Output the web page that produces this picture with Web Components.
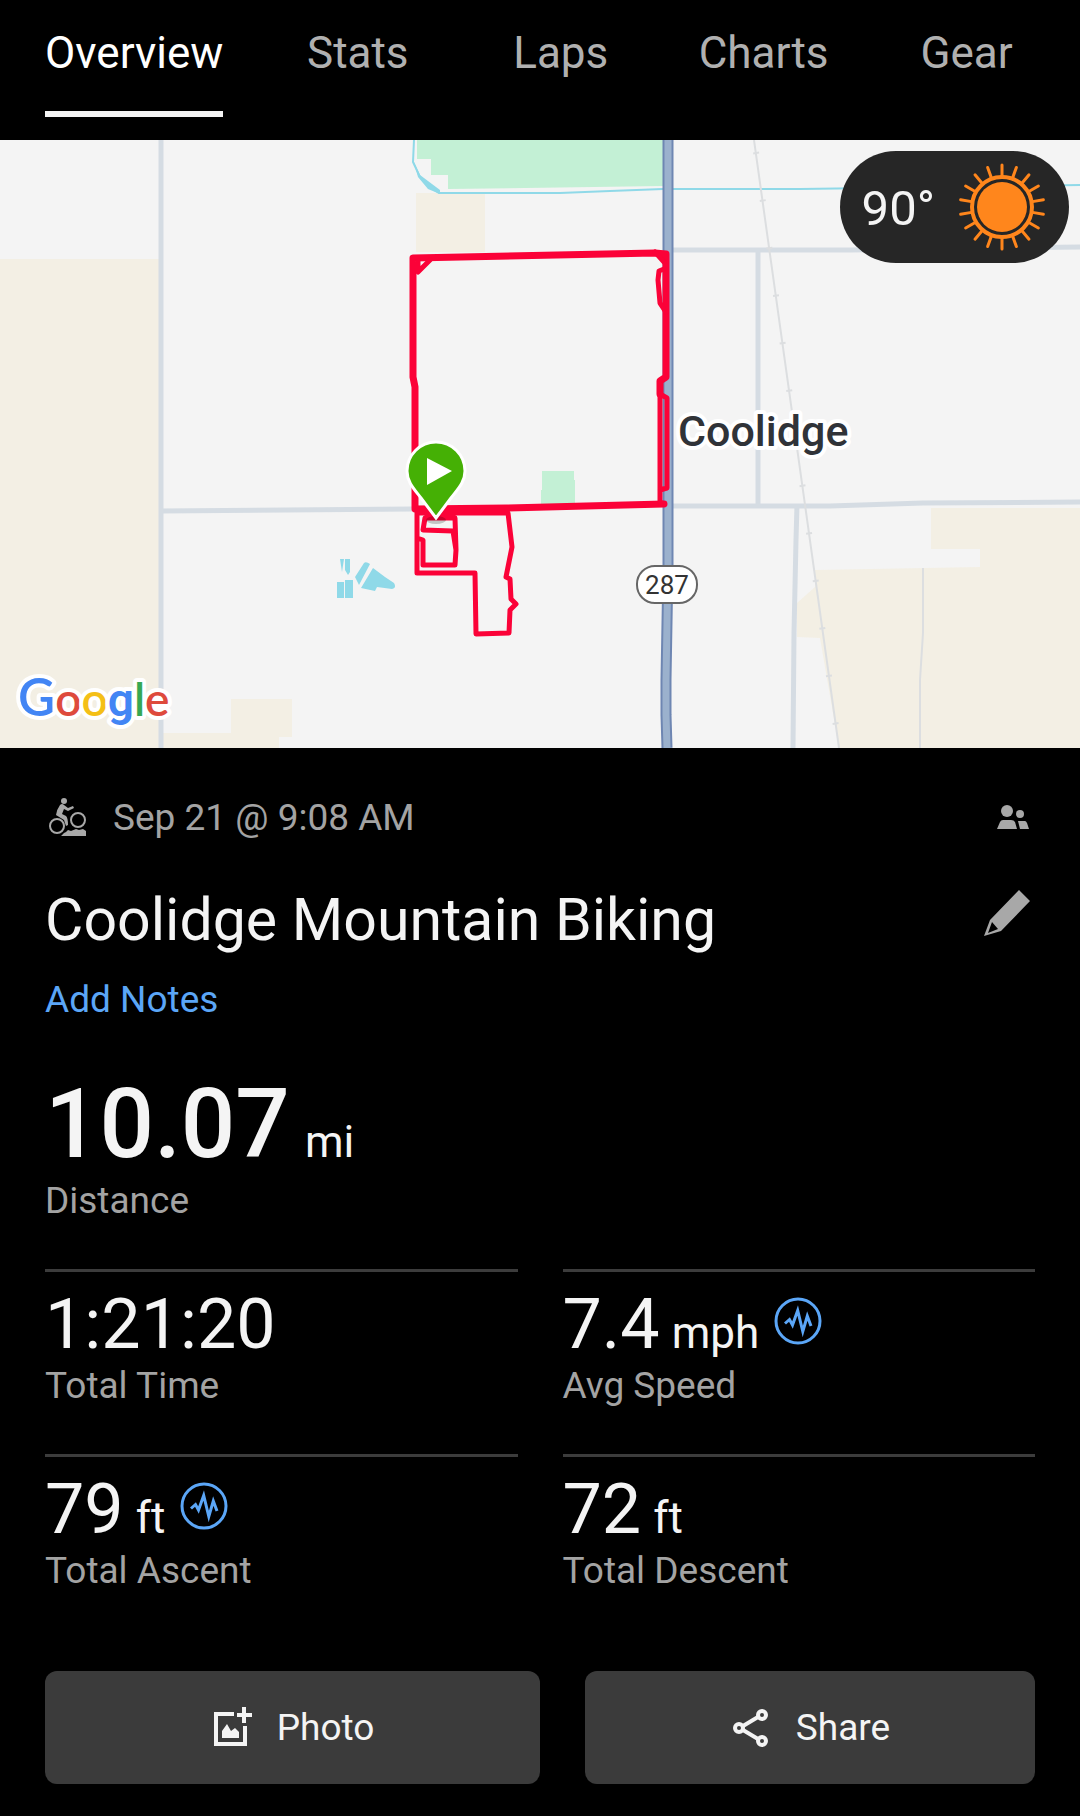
<!DOCTYPE html>
<html lang="en">
<head>
<meta charset="utf-8">
<meta name="viewport" content="width=device-width, initial-scale=1">
<title>Coolidge Mountain Biking</title>
<style>
  body {
    margin: 0;
    background-color: #000;
    color: #f4f4f4;
    font-family: Roboto, "Liberation Sans", sans-serif;
    --muted: #a3a3a3;
    --accent: #5ba6f7;
    --line: #3c3c3c;
  }
</style>
</head>
<body>

<tab-bar>
  <tab-item active>Overview</tab-item>
  <tab-item>Stats</tab-item>
  <tab-item>Laps</tab-item>
  <tab-item>Charts</tab-item>
  <tab-item>Gear</tab-item>
</tab-bar>

<route-map>
  <weather-badge>90°</weather-badge>
</route-map>

<activity-page>
  <activity-header>
    <span slot="date">Sep 21 @ 9:08 AM</span>
    <span slot="title">Coolidge Mountain Biking</span>
    <span slot="notes">Add Notes</span>
  </activity-header>

  <stat-item large unit="mi" label="Distance">10.07</stat-item>

  <stat-grid>
    <stat-item label="Total Time">1:21:20</stat-item>
    <stat-item unit="mph" label="Avg Speed" graph>7.4</stat-item>
    <stat-item unit="ft" label="Total Ascent" graph>79</stat-item>
    <stat-item unit="ft" label="Total Descent">72</stat-item>
  </stat-grid>

  <action-bar>
    <action-button icon="photo">Photo</action-button>
    <action-button icon="share">Share</action-button>
  </action-bar>
</activity-page>

<script>
// base class: puts the html of the subclass in an open shadow root
class BaseElement extends HTMLElement {
  constructor() {
    super();
    this.attachShadow({ mode: 'open' });
  }

  connectedCallback() {
    this.shadowRoot.innerHTML = this.render();
  }
}

class TabBar extends BaseElement {
  render() {
    return `
<style>
  :host{
    display: block;
  }
  nav{
    display: flex;
    padding: 0 12px;
  }
</style>
<nav><slot></slot></nav>`;
  }
}

class TabItem extends BaseElement {
  render() {
    return `
<style>
  :host{
    box-sizing: border-box;
    display: flex;
    justify-content: center;
    flex: 1 1 0;
    min-width: max-content;
    padding: 27px 33px 23px;
  }
  a{
    color: #b0b0b0;
    font-size: 44px;
    line-height: 52px;
    padding-bottom: 32px;
    border-bottom: 6px solid transparent;
    text-decoration: none;
  }
  :host([active]) a{
    color: #fff;
    border-color: #f4f4f4;
  }
</style>
<a href="#"><slot></slot></a>`;
  }
}

class RouteMap extends BaseElement {
  render() {
    return `
<style>
  :host{
    display: block;
    position: relative;
    background-color: #f4f4f4;
  }
  svg{
    display: block;
    width: 100%;
  }
  slot{
    position: absolute;
    display: block;
    top: 11px;
    right: 11px;
  }
  .sand{ fill: #f3efe4; }
  .park{ fill: #c3f0d5; }
  .water{ fill: #8fd9e8; }
  .road{ fill: none; stroke: #d5dce3; stroke-width: 5; }
  .lane{ fill: none; stroke: #dcdee0; stroke-width: 2; }
  .route{ fill: none; stroke: #fb0238; stroke-width: 5; stroke-linejoin: round; stroke-linecap: round; }
  .thick{ stroke-width: 7; }
  .town{
    font-size: 43px;
    font-weight: 500;
    fill: #303338;
  }
  .halo{
    stroke: #fff;
    stroke-width: 8px;
    stroke-linejoin: round;
    paint-order: stroke;
  }
  .shield{ font-size: 26px; fill: #333; text-anchor: middle; }
  .google{ font-family: Lato, sans-serif; font-size: 46px; font-weight: 600; }
  .google .cap{ font-size: 51px; }
</style>
<svg viewBox="0 0 1080 608">
  <!-- ground -->
  <path class="sand" d="M0 119H161V608H0zM416 53H485V112H416zM161 593H231V559H292V597H279V608H161z
    M931 368H1080V608H839L820 498L797 497V463L815 447V430L980 427V409H931z"/>
  <path class="park" d="M417 0H663V46L448 49V35H431V19H417zM542 331H574V340H575V364H541V350H542z"/>
  <path fill="none" stroke="#8fd9e8" stroke-width="2" d="M414 0L413 22L420 37L428 46L439 53H560L610 51L663 49H800L1080 45"/>
  <path class="water" d="M413 20L420 35L440 50V54L428 49L418 37z"/>
  <path class="water" d="M345 419H350V432L348 435L345 430zM340 419H344L342 432zM337 442H344V458H337zM345 440H353V458H345z
    M355 437L364 423Q366 421 370 424L359 445zM373 428L385 437L394 443Q397 448 392 449L377 447L375 451L361 448z"/>

  <!-- roads -->
  <path class="road" d="M161 0V608M161 371L412 369M672 110H850L1080 107M758 110V365
    M672 366H830L923 363L1080 362M797 365L796 400L794 493L793 608"/>
  <path class="lane" d="M923 428V493L920 540V608M754 0L839 608"/>
  <path class="lane" style="stroke-width:6" stroke-dasharray="2 46" d="M756 12L839 608"/>
  <path fill="none" stroke="#6e86b2" stroke-width="11" d="M668 0V425L666 540V575L667 608"/>
  <path fill="none" stroke="#9bb1cd" stroke-width="7" d="M668 0V425L666 540V575L667 608"/>

  <!-- ridden track -->
  <path class="route thick" d="M415 368V247L413 237V118L655 113L666 114V237L660 241V254M415 369L507 368L664 364"/>
  <path class="route" d="M430 120L418 132V121M655 112L664 122M664 129L659 131L658 140L660 163L666 172
    M660 254L667 258V348L660 350M660 254V362L664 364"/>
  <path class="route" d="M417 370V398L423 400V425H455L456 410L453 391L423 390L425 378H455L456 410
    M417 398V433H475L476 494L509 493L510 470L516 464L511 459L510 439L506 437L512 407L508 373H417"/>

  <!-- start pin -->
  <ellipse cx="436" cy="380" rx="10" ry="4" fill="#000" opacity=".2"/>
  <path fill="#45b005" stroke="#fff" stroke-width="3" d="M436 378L451 358C458 349 465 342 465 331A29 29 0 0 0 407 331C407 342 414 349 421 358z"/>
  <path fill="#fff" d="M427 318L452 331L427 345z"/>

  <text class="town halo" x="678" y="306">Coolidge</text>
  <rect x="637" y="426" width="60" height="37" rx="18" fill="#fff" stroke="#666" stroke-width="2"/>
  <text class="shield" x="667" y="454">287</text>
  <text class="google halo" x="18" y="576"><tspan class="cap" fill="#4285f4">G</tspan><tspan fill="#de4a3c">o</tspan><tspan fill="#f4bf16">o</tspan><tspan fill="#4285f4" font-family="Roboto">g</tspan><tspan fill="#36a853">l</tspan><tspan fill="#de4a3c">e</tspan></text>
</svg>
<slot></slot>`;
  }
}

class WeatherBadge extends BaseElement {
  render() {
    let rays = '';
    for (let i = 0; i < 18; i++) {
      rays += `<path d="M44 2V13" transform="rotate(${i * 20} 44 44)"/>`;
    }
    return `
<style>
  :host{
    display: flex;
    align-items: center;
    gap: 23px;
    padding: 12px 23px 12px 22px;
    border-radius: 57px;
    background-color: #262626;
    font-size: 49px;
    line-height: 56px;
  }
  span{
    padding-top: 4px;
  }
  svg{
    width: 88px;
    height: 88px;
  }
</style>
<span><slot></slot></span>
<svg viewBox="0 0 88 88" fill="none" stroke="#ff861c" stroke-width="3" stroke-linecap="round">
  <circle cx="44" cy="44" r="25" fill="#ff861c" stroke="none"/>
  <circle cx="44" cy="44" r="30" stroke-width="4"/>
  ${rays}
</svg>`;
  }
}

class ActivityPage extends BaseElement {
  render() {
    return `
<style>
  :host{
    display: block;
    padding: 46px 45px 32px;
  }
</style>
<main><slot></slot></main>`;
  }
}

class ActivityHeader extends BaseElement {
  render() {
    return `
<style>
  :host{
    display: block;
    margin-bottom: 47px;
  }
  .row{
    display: flex;
    align-items: flex-start;
    justify-content: space-between;
  }
  .date{
    display: flex;
    gap: 23px;
    color: var(--muted);
    font-size: 37px;
    line-height: 47px;
  }
  h1{
    margin: 0;
    font-size: 59px;
    font-weight: 400;
    line-height: 70px;
  }
  .top{
    margin-bottom: 44px;
  }
  .title{
    margin-bottom: 23px;
  }
  svg{
    display: block;
    fill: #a8a8a8;
  }
  button{
    padding: 0;
    border: 0;
    background: none;
    cursor: pointer;
  }
  a{
    display: block;
    width: max-content;
    color: var(--accent);
    font-size: 37px;
    line-height: 44px;
    text-decoration: none;
  }
</style>
<div class="row top">
  <div class="date">
    <svg width="45" height="45" viewBox="0 0 45 45">
      <circle cx="19" cy="7" r="3"/>
      <path d="M15 11Q17 9 19 11L23 14L28 12L29 14L23 17L19 15L17 20L21 22Q23 24 23 31L21 32L19 26L11 21Q12 15 15 11z"/>
      <circle cx="12" cy="32" r="7" fill="none" stroke="#a8a8a8" stroke-width="2"/>
      <circle cx="33" cy="26" r="7" fill="none" stroke="#a8a8a8" stroke-width="2"/>
      <path d="M16 42L19 39L21 38L23 36L26 37L31 35L34 36L38 35L41 37V42z"/>
    </svg>
    <slot name="date"></slot>
  </div>
  <button aria-label="Privacy">
    <svg width="45" height="45" viewBox="0 0 45 45">
      <circle cx="17" cy="17" r="6"/>
      <circle cx="30" cy="20" r="4"/>
      <path d="M7 35L10 28Q11 26 13 26H21Q24 26 25 28L27 35zM28 27H35Q36 27 37 29L39 35H30z"/>
    </svg>
  </button>
</div>
<div class="row title">
  <h1><slot name="title"></slot></h1>
  <button aria-label="Edit">
    <svg width="52" height="54" viewBox="0 0 52 54">
      <path fill-rule="evenodd" d="M36 5L47 16L18 46L1 51L7 35zM9 37L5 48L15 44z"/>
    </svg>
  </button>
</div>
<a href="#"><slot name="notes"></slot></a>`;
  }
}

class StatItem extends BaseElement {
  render() {
    const unit = this.getAttribute('unit');
    return `
<style>
  :host{
    display: block;
  }
  .value{
    display: flex;
    align-items: baseline;
    gap: 12px;
    font-size: 70px;
    line-height: 80px;
  }
  :host([large]) .value{
    gap: 15px;
    font-size: 96px;
    font-weight: 500;
    line-height: 110px;
  }
  .unit{
    font-size: 44px;
    font-weight: 400;
    line-height: 52px;
  }
  .label{
    color: var(--muted);
    font-size: 37px;
    line-height: 44px;
  }
</style>
<div class="value">
  <span><slot></slot></span>
  ${unit ? `<span class="unit">${unit}</span>` : ''}
  ${this.hasAttribute('graph') ? `
  <svg width="54" height="54" viewBox="0 0 54 54" fill="none" stroke="#5ba6f7" stroke-width="3">
    <circle cx="27" cy="27" r="22"/>
    <path d="M14 29.500L18.500 25.500L21.500 31L26.700 16.500L31.800 37.500L36.300 22L40 32"/>
  </svg>` : ''}
</div>
<div class="label">${this.getAttribute('label')}</div>`;
  }
}

class StatGrid extends BaseElement {
  render() {
    return `
<style>
  :host{
    display: grid;
    grid-template-columns: 1fr 1fr;
    gap: 46px 45px;
    margin-top: 46px;
  }
  ::slotted(stat-item){
    padding-top: 12px;
    border-top: 3px solid var(--line);
  }
</style>
<slot></slot>`;
  }
}

class ActionBar extends BaseElement {
  render() {
    return `
<style>
  :host{
    display: grid;
    grid-template-columns: 11fr 10fr;
    gap: 45px;
    margin-top: 78px;
  }
</style>
<slot></slot>`;
  }
}

const icons = {
  photo: `
  <path d="M23 8H5V38H34V20M33 1V17M26 9H41"/>
  <path fill="currentColor" stroke="none" d="M11 32V25L16 18L20 25L24 22L28 26V32z"/>`,
  share: `
  <circle cx="32" cy="9" r="4"/>
  <circle cx="9" cy="22" r="4"/>
  <circle cx="32" cy="35" r="4"/>
  <path d="M13 20L28 11M13 24L28 33"/>`,
};

class ActionButton extends BaseElement {
  render() {
    return `
<style>
  :host{
    display: block;
  }
  button{
    display: flex;
    align-items: center;
    justify-content: center;
    gap: 22px;
    width: 100%;
    padding: 35px 20px 34px;
    border: 0;
    border-radius: 12px;
    background-color: #3b3b3b;
    color: #f4f4f4;
    font: 37px/44px Roboto, "Liberation Sans", sans-serif;
    cursor: pointer;
  }
</style>
<button>
  <svg width="44" height="44" viewBox="0 0 44 44" fill="none" stroke="currentColor" stroke-width="4">${icons[this.getAttribute('icon')]}</svg>
  <slot></slot>
</button>`;
  }
}

customElements.define('tab-bar', TabBar);
customElements.define('tab-item', TabItem);
customElements.define('route-map', RouteMap);
customElements.define('weather-badge', WeatherBadge);
customElements.define('activity-page', ActivityPage);
customElements.define('activity-header', ActivityHeader);
customElements.define('stat-item', StatItem);
customElements.define('stat-grid', StatGrid);
customElements.define('action-bar', ActionBar);
customElements.define('action-button', ActionButton);
</script>
</body>
</html>
